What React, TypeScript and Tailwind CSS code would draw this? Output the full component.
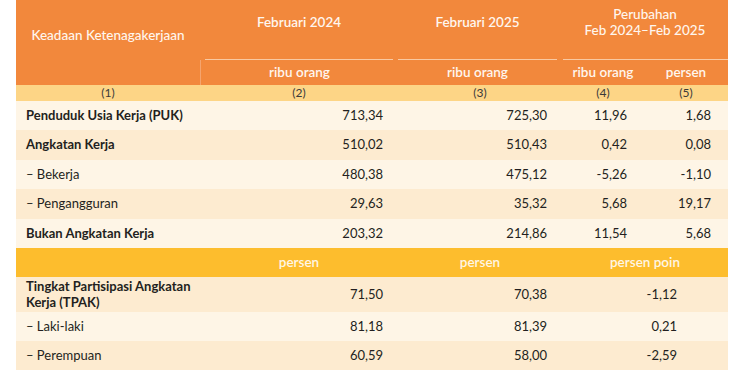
import React from "react";

const font = { fontFamily: "Lato, 'Open Sans', sans-serif" };

type Row = { label: string; bold?: boolean; v: string[]; dark?: boolean };

const rows: Row[] = [
  { label: "Penduduk Usia Kerja (PUK)", bold: true, v: ["713,34", "725,30", "11,96", "1,68"] },
  { label: "Angkatan Kerja", bold: true, v: ["510,02", "510,43", "0,42", "0,08"], dark: true },
  { label: "– Bekerja", v: ["480,38", "475,12", "-5,26", "-1,10"] },
  { label: "– Pengangguran", v: ["29,63", "35,32", "5,68", "19,17"], dark: true },
  { label: "Bukan Angkatan Kerja", bold: true, v: ["203,32", "214,86", "11,54", "5,68"] },
];

export default function App() {
  return (
    <div className="w-[750px] h-[375px] bg-white text-[13px] text-[#231f20]" style={font}>
      <div className="ml-[16px] w-[712px]">
        {/* Header */}
        <div className="flex h-[85px] bg-[#f2883c] text-[#fff6ee] font-semibold text-[13.5px]">
          <div className="w-[184px] flex items-center justify-center pb-[15px] font-medium">
            Keadaan Ketenagakerjaan
          </div>
          <div className="w-[198px] flex flex-col">
            <div className="h-[59px] flex items-center justify-center pb-[15px]">Februari 2024</div>
            <div className="h-[1px] ml-[5px] mr-[5px] bg-[#f9c9a2]" />
            <div className="flex-1 flex items-center justify-center border-l border-[#f5a46e]">ribu orang</div>
          </div>
          <div className="w-[164px] flex flex-col">
            <div className="h-[59px] flex items-center justify-center pb-[15px] pr-[5px]">Februari 2025</div>
            <div className="h-[1px] mr-[5px] bg-[#f9c9a2]" />
            <div className="flex-1 flex items-center justify-center pr-[5px]">ribu orang</div>
          </div>
          <div className="w-[166px] flex flex-col">
            <div className="h-[59px] flex flex-col items-center justify-center pb-[16px] leading-[16px] font-medium">
              <span>Perubahan</span>
              <span>Feb 2024–Feb 2025</span>
            </div>
            <div className="h-[1px] ml-[1px] bg-[#f9c9a2]" />
            <div className="flex-1 flex">
              <div className="w-[82px] flex items-center justify-center">ribu orang</div>
              <div className="w-[84px] flex items-center justify-center">persen</div>
            </div>
          </div>
        </div>
        {/* Column numbers */}
        <div className="flex h-[16px] bg-[#fdd586] text-[12px] text-[#3a3a3a] leading-none">
          <div className="w-[184px] flex items-center justify-center">(1)</div>
          <div className="w-[198px] flex items-center justify-center">(2)</div>
          <div className="w-[164px] flex items-center justify-center">(3)</div>
          <div className="w-[82px] flex items-center justify-center">(4)</div>
          <div className="w-[84px] flex items-center justify-center">(5)</div>
        </div>
        {/* Data rows */}
        {rows.map((r, i) => (
          <div
            key={i}
            className={`flex h-[29.4px] items-center ${r.dark ? "bg-[#fdebd0]" : "bg-[#fef5e6]"}`}
          >
            <div className={`w-[184px] pl-[10px] ${r.bold ? "font-bold" : ""}`}>{r.label}</div>
            <div className="w-[198px] text-right pr-[15px]">{r.v[0]}</div>
            <div className="w-[164px] text-right pr-[15px]">{r.v[1]}</div>
            <div className="w-[82px] text-right pr-[17px]">{r.v[2]}</div>
            <div className="w-[84px] text-right pr-[17px]">{r.v[3]}</div>
          </div>
        ))}
        {/* persen band */}
        <div className="flex h-[29px] items-center bg-[#fdbd2d] text-[#fff6e6] font-semibold text-[13.5px]">
          <div className="w-[184px]" />
          <div className="w-[198px] text-center">persen</div>
          <div className="w-[164px] text-center">persen</div>
          <div className="w-[166px] text-center">persen poin</div>
        </div>
        {/* TPAK */}
        <div className="flex h-[35px] items-center bg-[#fdebd0]">
          <div className="w-[184px] pl-[10px] font-bold leading-[16px]">
            Tingkat Partisipasi Angkatan
            <br />
            Kerja (TPAK)
          </div>
          <div className="w-[198px] text-right pr-[15px]">71,50</div>
          <div className="w-[164px] text-right pr-[15px]">70,38</div>
          <div className="w-[166px] text-right pr-[51px]">-1,12</div>
        </div>
        <div className="flex h-[29px] items-center bg-[#fef5e6]">
          <div className="w-[184px] pl-[10px]">– Laki-laki</div>
          <div className="w-[198px] text-right pr-[15px]">81,18</div>
          <div className="w-[164px] text-right pr-[15px]">81,39</div>
          <div className="w-[166px] text-right pr-[51px]">0,21</div>
        </div>
        <div className="flex h-[29px] items-center bg-[#fdebd0]">
          <div className="w-[184px] pl-[10px]">– Perempuan</div>
          <div className="w-[198px] text-right pr-[15px]">60,59</div>
          <div className="w-[164px] text-right pr-[15px]">58,00</div>
          <div className="w-[166px] text-right pr-[51px]">-2,59</div>
        </div>
      </div>
    </div>
  );
}
